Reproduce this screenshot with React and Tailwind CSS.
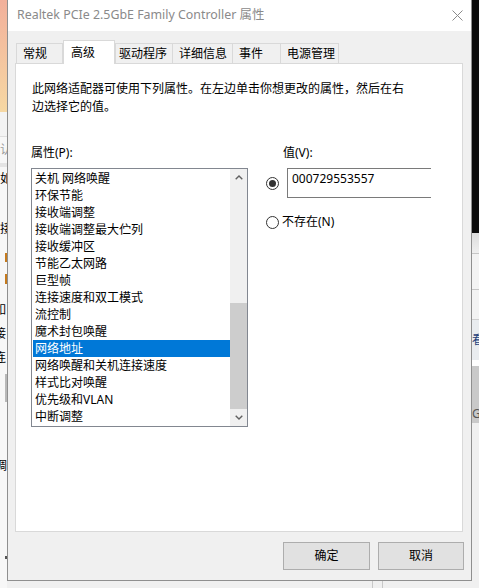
import { useState } from "react";

const items = [
  "关机 网络唤醒",
  "环保节能",
  "接收端调整",
  "接收端调整最大伫列",
  "接收缓冲区",
  "节能乙太网路",
  "巨型帧",
  "连接速度和双工模式",
  "流控制",
  "魔术封包唤醒",
  "网络地址",
  "网络唤醒和关机连接速度",
  "样式比对唤醒",
  "优先级和VLAN",
  "中断调整",
];

const tabs = [
  { label: "常规", cls: "w-[47px] pl-[6px]" },
  { label: "高级", cls: "w-[52px] pl-[7px]", active: true },
  { label: "驱动程序", cls: "w-[58px] pl-[3px]" },
  { label: "详细信息", cls: "w-[61px] pl-[6px] -ml-px" },
  { label: "事件", cls: "w-[49px] pl-[6px] -ml-px" },
  { label: "电源管理", cls: "w-[59px] pl-[6px] -ml-px" },
];

function Chevron({ down }) {
  return (
    <svg width="8" height="5" viewBox="0 0 8 5">
      <path
        d={down ? "M0.7 0.8 L4 4 L7.3 0.8" : "M0.7 4.2 L4 1 L7.3 4.2"}
        fill="none"
        stroke="#606060"
        strokeWidth="1.4"
      />
    </svg>
  );
}

function Radio({ checked }) {
  return (
    <span className="w-[13px] h-[13px] rounded-full border border-[#333333] bg-white flex items-center justify-center shrink-0">
      {checked && <span className="w-[7px] h-[7px] rounded-full bg-[#333333]" />}
    </span>
  );
}

export default function App() {
  const [selected, setSelected] = useState(10);
  const [notPresent, setNotPresent] = useState(false);

  return (
    <div className="w-[479px] h-[588px] overflow-hidden flex bg-[#f0f0f0] text-[12px] text-black font-['Noto_Sans','Noto_Sans_CJK_SC',sans-serif]">
      {/* background window, left */}
      <div className="w-[7px] shrink-0 flex flex-col overflow-hidden bg-[#f7f7f7]">
        <div className="h-[112px] bg-linear-to-b from-[#f2b09b] to-[#f6d8a3]" />
        <div className="h-[25px] bg-[#f3f3f3] border-b border-[#dedede]" />
        <div className="h-[26px] leading-[26px] text-[#9a9a9a] whitespace-nowrap">认</div>
        <div className="h-[4px] bg-[#e4e4e4]" />
        <div className="h-[24px] leading-[24px] whitespace-nowrap">如</div>
        <div className="h-[28px]" />
        <div className="h-[20px] leading-[20px] whitespace-nowrap">接</div>
        <div className="h-[14px]" />
        <div className="h-[9px] ml-[5px] w-[2px] bg-[#c57a1d]" />
        <div className="h-[12px]" />
        <div className="h-[10px] ml-[5px] w-[2px] bg-[#c57a1d]" />
        <div className="h-[14px]" />
        <div className="h-[24px] leading-[24px] whitespace-nowrap -ml-[6px]">如</div>
        <div className="h-[24px] leading-[24px] whitespace-nowrap -ml-[6px]">接</div>
        <div className="h-[24px] leading-[24px] whitespace-nowrap -ml-[6px]">连</div>
        <div className="h-[4px]" />
        <div className="h-[28px] ml-[5px] w-[2px] bg-[#b8b8b8]" />
        <div className="h-[56px]" />
        <div className="h-[16px] leading-[16px] whitespace-nowrap -ml-[5px]">调</div>
        <div className="h-[82px]" />
        <div className="h-[3px] ml-[5px] w-[2px] bg-[#555555]" />
      </div>

      <div className="w-[465px] shrink-0 flex flex-col">
        {/* dialog */}
        <div className="h-[581px] bg-[#f0f0f0] border-l border-r border-b border-[#8f8f8f] flex flex-col">
          <div className="h-[31px] shrink-0 bg-white flex items-center justify-between pl-[9px] pr-[8px]">
            <span className="text-[12.4px] text-[#8a8a8a] whitespace-nowrap">
              Realtek PCIe 2.5GbE Family Controller 属性
            </span>
            <svg width="11" height="11" viewBox="0 0 11 11">
              <path d="M0.5 0.5 L10.5 10.5 M10.5 0.5 L0.5 10.5" stroke="#8a8a8a" strokeWidth="1" />
            </svg>
          </div>

          {/* tabs */}
          <div className="relative z-10 mt-[9px] -mb-px ml-[8px] h-[24px] flex items-end">
            {tabs.map((t) =>
              t.active ? (
                <div
                  key={t.label}
                  className={`${t.cls} h-[24px] bg-white border-l border-t border-r border-[#d9d9d9] flex items-center whitespace-nowrap`}
                >
                  {t.label}
                </div>
              ) : (
                <div
                  key={t.label}
                  className={`${t.cls} h-[20px] mb-px bg-[#f0f0f0] border-l border-t border-r border-[#d9d9d9] flex items-center whitespace-nowrap`}
                >
                  {t.label}
                </div>
              )
            )}
          </div>

          {/* panel */}
          <div className="ml-[7px] w-[448px] h-[469px] shrink-0 bg-white border border-[#d9d9d9] pt-[16px] pl-[15px]">
            <p className="ml-[1px] w-[380px] leading-[18px]">
              此网络适配器可使用下列属性。在左边单击你想更改的属性，然后在右边选择它的值。
            </p>

            <div className="mt-[28px] flex">
              <div className="w-[217px] shrink-0">
                <div className="h-[18px] leading-[18px] mb-[6px]">属性(P):</div>
                <div className="h-[259px] border border-[#828790] flex">
                  <ul className="flex-1 pt-[1px] pl-[1px]">
                    {items.map((it, i) => (
                      <li
                        key={it}
                        onClick={() => setSelected(i)}
                        className={
                          i === selected
                            ? "h-[17px] leading-[17px] pl-[2px] bg-[#0078d7] text-white whitespace-nowrap"
                            : "h-[17px] leading-[17px] pl-[2px] whitespace-nowrap"
                        }
                      >
                        {it}
                      </li>
                    ))}
                  </ul>
                  <div className="w-[17px] shrink-0 bg-[#f0f0f0] flex flex-col">
                    <div className="h-[17px] flex items-center justify-center">
                      <Chevron />
                    </div>
                    <div className="flex-1 flex flex-col justify-end">
                      <div className="h-[106px] bg-[#cdcdcd]" />
                    </div>
                    <div className="h-[17px] flex items-center justify-center">
                      <Chevron down />
                    </div>
                  </div>
                </div>
              </div>

              <div className="ml-[18px] flex-1 overflow-hidden">
                <div className="h-[18px] leading-[18px] mb-[6px] pl-[17px]">值(V):</div>
                <div className="h-[30px] flex items-center" onClick={() => setNotPresent(false)}>
                  <Radio checked={!notPresent} />
                  <div className="ml-[8px] w-[144px] h-[30px] border-l border-t border-b border-[#7a7a7a] pl-[4px] pt-[1px] leading-[18px] whitespace-nowrap">
                    000729553557
                  </div>
                </div>
                <div className="mt-[15px] h-[18px] flex items-center" onClick={() => setNotPresent(true)}>
                  <Radio checked={notPresent} />
                  <span className="ml-[3px] leading-[18px] whitespace-nowrap">不存在(N)</span>
                </div>
              </div>
            </div>
          </div>

          {/* buttons */}
          <div className="mt-[10px] flex justify-end gap-[8px] pr-[7px]">
            <button className="w-[87px] h-[28px] bg-[#e1e1e1] border border-[#adadad] text-[12px]">确定</button>
            <button className="w-[86px] h-[28px] bg-[#e1e1e1] border border-[#adadad] text-[12px]">取消</button>
          </div>
        </div>
        <div className="flex-1 flex bg-[#f0f0f0]">
          <div className="ml-[365px] w-[1px] bg-[#c8c8c8]" />
          <div className="ml-[9px] w-[1px] bg-[#c8c8c8]" />
        </div>
      </div>

      {/* background window, right */}
      <div className="w-[7px] shrink-0 flex flex-col overflow-hidden bg-[#f0f0f0]">
        <div className="h-[233px] bg-[#0c0c0c]" />
        <div className="h-[21px] bg-linear-to-b from-[#dcdcdc] to-[#efefef] border-b border-[#c6c6c6]" />
        <div className="h-[36px] bg-[#f3f3f3] border-b border-[#c6c6c6]" />
        <div className="h-[30px] bg-[#f3f3f3] border-b border-[#cfcfcf]" />
        <div className="h-[40px] bg-[#e9ecef] leading-[40px] text-[#1f3f7a] whitespace-nowrap">看</div>
        <div className="h-[6px] bg-white" />
        <div className="h-[57px] bg-[#c9c9c9] flex flex-col justify-end">
          <div className="h-[18px] leading-[18px] text-[#555555] whitespace-nowrap">G</div>
        </div>
      </div>
    </div>
  );
}
